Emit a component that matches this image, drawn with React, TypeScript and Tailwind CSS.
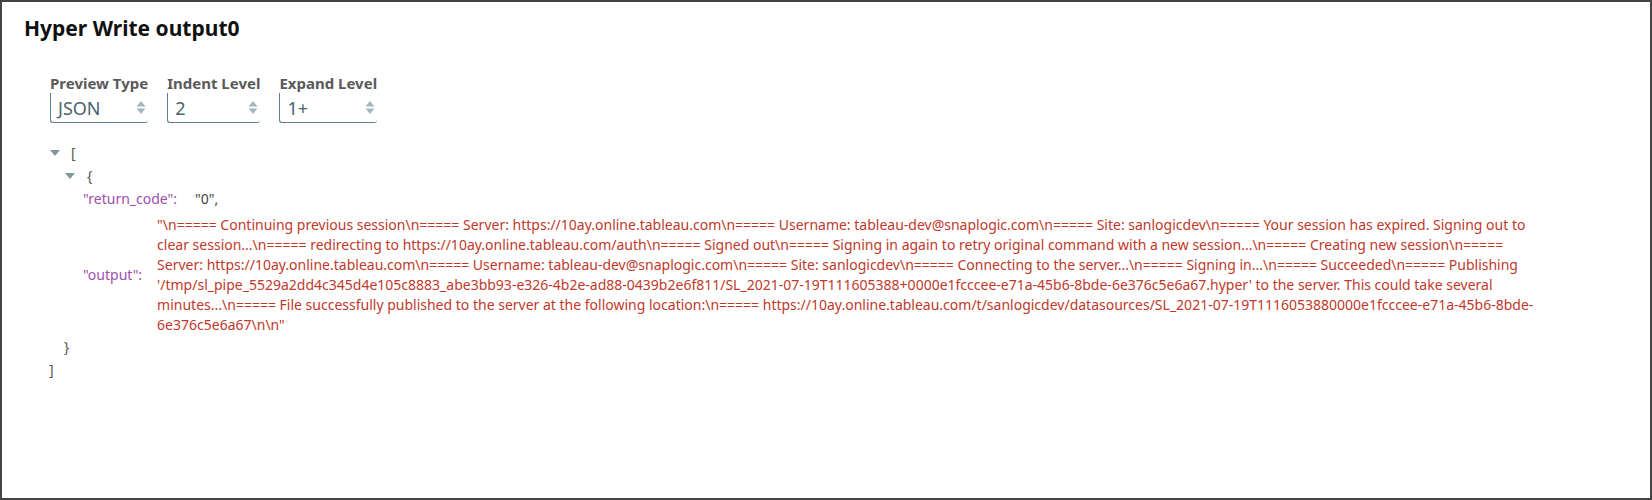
import React from "react";

// the value is split where the reference wraps it
const OUTPUT_LINES = [
  "\"\\n===== Continuing previous session\\n===== Server: https://10ay.online.tableau.com\\n===== Username: tableau-dev@snaplogic.com\\n===== Site: sanlogicdev\\n===== Your session has expired. Signing out to",
  "clear session...\\n===== redirecting to https://10ay.online.tableau.com/auth\\n===== Signed out\\n===== Signing in again to retry original command with a new session...\\n===== Creating new session\\n=====",
  "Server: https://10ay.online.tableau.com\\n===== Username: tableau-dev@snaplogic.com\\n===== Site: sanlogicdev\\n===== Connecting to the server...\\n===== Signing in...\\n===== Succeeded\\n===== Publishing",
  "'/tmp/sl_pipe_5529a2dd4c345d4e105c8883_abe3bb93-e326-4b2e-ad88-0439b2e6f811/SL_2021-07-19T111605388+0000e1fcccee-e71a-45b6-8bde-6e376c5e6a67.hyper' to the server. This could take several",
  "minutes...\\n===== File successfully published to the server at the following location:\\n===== https://10ay.online.tableau.com/t/sanlogicdev/datasources/SL_2021-07-19T1116053880000e1fcccee-e71a-45b6-8bde-",
  "6e376c5e6a67\\n\\n\"",
];

function Spinner() {
  return (
    <svg width="10" height="15" viewBox="0 0 10 15" className="shrink-0">
      <path d="M5 1 L9.5 6.5 L0.5 6.5 Z" fill="#a3b8bd" />
      <path d="M5 14 L9.5 8.5 L0.5 8.5 Z" fill="#a3b8bd" />
    </svg>
  );
}

function Field({ label, value }: { label: string; value: string }) {
  return (
    <div className="inline-flex flex-col">
      <span className="text-[15px] font-bold leading-5 text-[#5a5a5a]">{label}</span>
      <div className="flex h-[30px] items-center justify-between rounded-bl-[3px] rounded-br-[3px] border-b border-l border-[#5f7f8c] pl-[7px] pr-[2px]">
        <span className="text-[18px] leading-6 text-[#4a6470]">{value}</span>
        <Spinner />
      </div>
    </div>
  );
}

function Caret() {
  return (
    <svg width="10" height="6" viewBox="0 0 10 6" className="shrink-0">
      <path d="M0 0 L10 0 L5 6 Z" fill="#7f979d" />
    </svg>
  );
}

export default function App() {
  return (
    <div
      className="h-[500px] w-[1652px] overflow-hidden border-2 border-[#444] bg-white"
      style={{ fontFamily: '"Noto Sans", "Open Sans", sans-serif' }}
    >
      <div className="px-[22px] pt-[12px]">
        <h1 className="text-[21px] font-bold leading-[28px] text-[#111]">Hyper Write output0</h1>
        <div className="mt-[31px] flex gap-[19px] pl-[26px]">
          <Field label="Preview Type" value="JSON" />
          <Field label="Indent Level" value="2" />
          <Field label="Expand Level" value="1+" />
        </div>
        <div className="mt-[18px] text-[14px] leading-5 text-[#555]">
          <div className="flex h-[23px] items-center pl-[26px]">
            <Caret />
            <span className="ml-[11px]">[</span>
          </div>
          <div className="flex h-[23px] items-center pl-[41px]">
            <Caret />
            <span className="ml-[12px]">{"{"}</span>
          </div>
          <div className="flex h-[24px] items-center pl-[59px]">
            <span className="text-[#a04fae]">"return_code":</span>
            <span className="ml-[18px] text-[#444]">"0",</span>
          </div>
          <div className="mt-[4px] flex items-center pl-[59px]">
            <span className="shrink-0 text-[#a04fae]">"output":</span>
            <div className="ml-[15px] text-[#c0392b]">
              {OUTPUT_LINES.map((line) => (
                <div key={line} className="whitespace-nowrap">
                  {line}
                </div>
              ))}
            </div>
          </div>
          <div className="flex h-[24px] items-center pl-[40px]">{"}"}</div>
          <div className="flex h-[21px] items-center pl-[25px]">]</div>
        </div>
      </div>
    </div>
  );
}
